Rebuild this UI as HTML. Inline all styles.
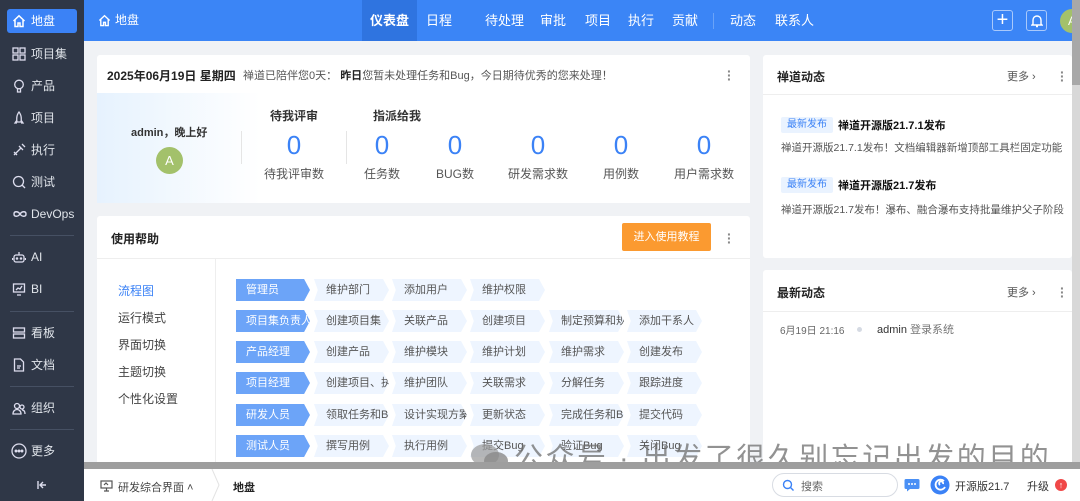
<!DOCTYPE html>
<html><head><meta charset="utf-8">
<style>
*{box-sizing:border-box;margin:0;padding:0}
body{width:1080px;height:501px;overflow:hidden;position:relative;background:#f0f2f5;font-family:"Liberation Sans","Noto Sans CJK SC",sans-serif;font-size:12px;color:#333}
.abs{position:absolute}
#side{left:0;top:0;width:84px;height:501px;background:#2f3747}
.si{position:absolute;left:7px;width:70px;height:24px;color:#e0e4ea;font-size:12px;line-height:24px;padding-left:24px}
.si svg{position:absolute;left:5px;top:5px}
.si.on{background:#3b82f6;border-radius:3px;color:#fff}
.sep{position:absolute;left:10px;width:64px;height:1px;background:#465063}
#top{left:84px;top:0;width:996px;height:41px;background:#3b85f6;color:#fff}
.nav{position:absolute;top:0;height:41px;line-height:41px;font-size:13px;color:#fff}
.card{position:absolute;background:#fff;border-radius:3px}
.chev{position:absolute;height:22px;line-height:22px;font-size:11px;color:#555;background:#eef5ff;padding-left:12px;clip-path:polygon(0 0,92% 0,100% 50%,92% 100%,0 100%,5% 50%);white-space:nowrap;overflow:hidden;width:75px}
.role{background:#6ca4f8;color:#fff;clip-path:polygon(0 0,92% 0,100% 50%,92% 100%,0 100%);padding-left:10px;width:74px}
.dots{position:absolute;color:#888;font-size:14px;font-weight:bold;line-height:4px;width:4px;text-align:center}
.num{position:absolute;color:#3b82f6;font-size:26px;text-align:center;width:80px}
.lbl{position:absolute;color:#555;font-size:12px;text-align:center;width:100px}
</style></head><body>
<div id="side" class="abs">
 <div class="si on" style="top:9px"><svg width="14" height="14" viewBox="0 0 14 14" fill="none" stroke="#fff" stroke-width="1.5"><path d="M1.5 7L7 1.8 12.5 7M3 5.8V12.5h3V9h2v3.5h3V5.8"/></svg>地盘</div>
 <div class="si" style="top:42px"><svg width="14" height="14" viewBox="0 0 14 14" fill="none" stroke="#dde" stroke-width="1.3"><rect x="1" y="1" width="5" height="5"/><rect x="8" y="1" width="5" height="5"/><rect x="1" y="8" width="5" height="5"/><rect x="8" y="8" width="5" height="5"/></svg>项目集</div>
 <div class="si" style="top:74px"><svg width="14" height="14" viewBox="0 0 14 14" fill="none" stroke="#dde" stroke-width="1.3"><circle cx="7" cy="5.5" r="4.3"/><path d="M5.5 10v3h3v-3"/></svg>产品</div>
 <div class="si" style="top:106px"><svg width="14" height="14" viewBox="0 0 14 14" fill="none" stroke="#dde" stroke-width="1.3"><path d="M7 1C4.5 4 4.5 8 5 11h4c.5-3 .5-7-2-10zM5 9L3 12h2M9 9l2 3H9"/></svg>项目</div>
 <div class="si" style="top:138px"><svg width="14" height="14" viewBox="0 0 14 14" fill="none" stroke="#dde" stroke-width="1.3"><path d="M2 12L9 5M7 3l4 4M10 1l3 3M2 9l3 3"/></svg>执行</div>
 <div class="si" style="top:170px"><svg width="14" height="14" viewBox="0 0 14 14" fill="none" stroke="#dde" stroke-width="1.3"><circle cx="6.5" cy="6.5" r="5"/><path d="M10 10l3 3"/></svg>测试</div>
 <div class="si" style="top:202px"><svg width="16" height="14" viewBox="0 0 16 14" fill="none" stroke="#dde" stroke-width="1.4"><path d="M8 7c-2-3-6-3-6 0s4 3 6 0 6-3 6 0-4 3-6 0z"/></svg>DevOps</div>
 <div class="sep" style="top:235px"></div>
 <div class="si" style="top:245px"><svg width="14" height="14" viewBox="0 0 14 14" fill="none" stroke="#dde" stroke-width="1.3"><rect x="2" y="5" width="10" height="7" rx="2"/><path d="M7 5V2M0.5 8v2M13.5 8v2"/><circle cx="5" cy="8.5" r=".6"/><circle cx="9" cy="8.5" r=".6"/></svg>AI</div>
 <div class="si" style="top:277px"><svg width="14" height="14" viewBox="0 0 14 14" fill="none" stroke="#dde" stroke-width="1.3"><rect x="1.5" y="2" width="11" height="8"/><path d="M4 8l2-2 2 1 2-3M5 13h4"/></svg>BI</div>
 <div class="sep" style="top:311px"></div>
 <div class="si" style="top:321px"><svg width="14" height="14" viewBox="0 0 14 14" fill="none" stroke="#dde" stroke-width="1.3"><rect x="1.5" y="2" width="11" height="4"/><rect x="1.5" y="8" width="11" height="4"/></svg>看板</div>
 <div class="si" style="top:353px"><svg width="14" height="14" viewBox="0 0 14 14" fill="none" stroke="#dde" stroke-width="1.3"><path d="M2.5 1h6l3 3v9h-9zM5 8h4M5 10h3"/></svg>文档</div>
 <div class="sep" style="top:386px"></div>
 <div class="si" style="top:396px"><svg width="14" height="14" viewBox="0 0 14 14" fill="none" stroke="#dde" stroke-width="1.3"><circle cx="5" cy="5" r="2.5"/><circle cx="10" cy="6" r="2"/><path d="M1 13c0-3 2-4.5 4-4.5s4 1.5 4 4.5zM10 9c2 0 3 1.5 3 4"/></svg>组织</div>
 <div class="sep" style="top:429px"></div>
 <div class="si" style="top:439px"><svg width="16" height="16" viewBox="0 0 16 16" fill="none" stroke="#dde" stroke-width="1.3" style="top:4px;left:4px"><circle cx="8" cy="8" r="7"/><circle cx="5" cy="8" r=".8" fill="#dde"/><circle cx="8" cy="8" r=".8" fill="#dde"/><circle cx="11" cy="8" r=".8" fill="#dde"/></svg>更多</div>
 <svg class="abs" style="left:36px;top:479px" width="12" height="12" viewBox="0 0 12 12" fill="none" stroke="#dde" stroke-width="1.4"><path d="M2 2v8M10 6H4M7 3L4 6l3 3"/></svg>
</div>
<div id="top" class="abs">
 <svg class="abs" style="left:14px;top:14px" width="13" height="13" viewBox="0 0 14 14" fill="none" stroke="#fff" stroke-width="1.5"><path d="M1.5 7L7 1.8 12.5 7M3 5.8V12.5h3V9h2v3.5h3V5.8"/></svg>
 <div class="nav" style="left:31px;font-size:12px">地盘</div>
 <div class="nav" style="left:278px;width:55px;background:#2f74e0;text-align:center;font-weight:bold">仪表盘</div>
 <div class="nav" style="left:342px">日程</div>
 <div class="nav" style="left:401px">待处理</div>
 <div class="nav" style="left:456px">审批</div>
 <div class="nav" style="left:501px">项目</div>
 <div class="nav" style="left:544px">执行</div>
 <div class="nav" style="left:588px">贡献</div>
 <div class="abs" style="left:629px;top:13px;width:1px;height:16px;background:#6aa3f8"></div>
 <div class="nav" style="left:646px">动态</div>
 <div class="nav" style="left:691px">联系人</div>
 <div class="abs" style="left:908px;top:10px;width:21px;height:21px;border:1px solid #a9c9fb;border-radius:3px;color:#fff;font-size:20px;line-height:18px;text-align:center">+</div>
 <div class="abs" style="left:942px;top:10px;width:21px;height:21px;border:1px solid #a9c9fb;border-radius:3px"><svg style="position:absolute;left:4px;top:3px" width="12" height="14" viewBox="0 0 12 14" fill="none" stroke="#fff" stroke-width="1.4"><path d="M2 10V6a4 4 0 018 0v4l1 1H1zM5 12.5h2"/></svg></div>
 <div class="abs" style="left:976px;top:9px;width:24px;height:24px;border-radius:50%;background:#a3c16b;color:#fff;line-height:24px;padding-left:8px">A</div>
</div>
<div class="abs" style="left:1072px;top:0;width:8px;height:462px;background:#d8d8d8"><div style="margin-top:0;height:85px;background:#a8a8a8"></div></div>

<!-- card1 -->
<div class="card" style="left:97px;top:55px;width:653px;height:148px">
 <div class="abs" style="left:10px;top:12px;font-weight:bold;font-size:12px;color:#222">2025年06月19日 星期四</div>
 <div class="abs" style="left:146px;top:12px;font-size:11px;color:#555">禅道已陪伴您0天： <b style="color:#222">昨日</b>您暂未处理任务和Bug，今日期待优秀的您来处理！</div>
 <div class="dots" style="left:630px;top:14px">·<br>·<br>·</div>
 <div class="abs" style="left:0;top:38px;width:653px;height:110px;background:linear-gradient(90deg,#e6f2fe 0%,#fff 25%)"></div>
 <div class="abs" style="left:34px;top:69px;font-weight:bold;font-size:11px;color:#333">admin，晚上好</div>
 <div class="abs" style="left:59px;top:92px;width:27px;height:27px;border-radius:50%;background:#a3c16b;color:#fff;text-align:center;line-height:27px;font-size:13px">A</div>
 <div class="abs" style="left:144px;top:76px;width:1px;height:33px;background:#e5e5e5"></div>
 <div class="abs" style="left:249px;top:76px;width:1px;height:33px;background:#e5e5e5"></div>
 <div class="abs" style="left:173px;top:52px;font-weight:bold;font-size:12px">待我评审</div>
 <div class="abs" style="left:276px;top:52px;font-weight:bold;font-size:12px">指派给我</div>
 <div class="num" style="left:157px;top:75px">0</div><div class="lbl" style="left:147px;top:110px">待我评审数</div>
 <div class="num" style="left:245px;top:75px">0</div><div class="lbl" style="left:235px;top:110px">任务数</div>
 <div class="num" style="left:318px;top:75px">0</div><div class="lbl" style="left:308px;top:110px">BUG数</div>
 <div class="num" style="left:401px;top:75px">0</div><div class="lbl" style="left:391px;top:110px">研发需求数</div>
 <div class="num" style="left:484px;top:75px">0</div><div class="lbl" style="left:474px;top:110px">用例数</div>
 <div class="num" style="left:567px;top:75px">0</div><div class="lbl" style="left:557px;top:110px">用户需求数</div>
</div>

<!-- card2 -->
<div class="card" style="left:97px;top:216px;width:653px;height:260px">
 <div class="abs" style="left:14px;top:14px;font-weight:bold;font-size:12px;color:#222">使用帮助</div>
 <div class="abs" style="left:525px;top:7px;width:89px;height:28px;background:#fb9a30;color:#fff;border-radius:2px;text-align:center;line-height:28px;font-size:11px">进入使用教程</div>
 <div class="dots" style="left:630px;top:16px">·<br>·<br>·</div>
 <div class="abs" style="left:0;top:42px;width:653px;height:1px;background:#eee"></div>
 <div class="abs" style="left:118px;top:43px;width:1px;height:220px;background:#eee"></div>
 <div class="abs" style="left:21px;top:62px;color:#3b82f6;font-size:12px;line-height:27px">流程图<br><span style="color:#444">运行模式<br>界面切换<br>主题切换<br>个性化设置</span></div>
</div>
<div class="abs" style="left:0;top:0">
 <div class="chev role" style="left:236px;top:279px">管理员</div>
 <div class="chev" style="left:314px;top:279px">维护部门</div><div class="chev" style="left:392px;top:279px">添加用户</div><div class="chev" style="left:470px;top:279px">维护权限</div>
 <div class="chev role" style="left:236px;top:310px">项目集负责人</div>
 <div class="chev" style="left:314px;top:310px">创建项目集</div><div class="chev" style="left:392px;top:310px">关联产品</div><div class="chev" style="left:470px;top:310px">创建项目</div><div class="chev" style="left:549px;top:310px">制定预算和规划</div><div class="chev" style="left:627px;top:310px">添加干系人</div>
 <div class="chev role" style="left:236px;top:341px">产品经理</div>
 <div class="chev" style="left:314px;top:341px">创建产品</div><div class="chev" style="left:392px;top:341px">维护模块</div><div class="chev" style="left:470px;top:341px">维护计划</div><div class="chev" style="left:549px;top:341px">维护需求</div><div class="chev" style="left:627px;top:341px">创建发布</div>
 <div class="chev role" style="left:236px;top:372px">项目经理</div>
 <div class="chev" style="left:314px;top:372px">创建项目、执行</div><div class="chev" style="left:392px;top:372px">维护团队</div><div class="chev" style="left:470px;top:372px">关联需求</div><div class="chev" style="left:549px;top:372px">分解任务</div><div class="chev" style="left:627px;top:372px">跟踪进度</div>
 <div class="chev role" style="left:236px;top:404px">研发人员</div>
 <div class="chev" style="left:314px;top:404px">领取任务和Bug</div><div class="chev" style="left:392px;top:404px">设计实现方案</div><div class="chev" style="left:470px;top:404px">更新状态</div><div class="chev" style="left:549px;top:404px">完成任务和Bug</div><div class="chev" style="left:627px;top:404px">提交代码</div>
 <div class="chev role" style="left:236px;top:435px">测试人员</div>
 <div class="chev" style="left:314px;top:435px">撰写用例</div><div class="chev" style="left:392px;top:435px">执行用例</div><div class="chev" style="left:470px;top:435px">提交Bug</div><div class="chev" style="left:549px;top:435px">验证Bug</div><div class="chev" style="left:627px;top:435px">关闭Bug</div>
</div>

<!-- right cards -->
<div class="card" style="left:763px;top:55px;width:309px;height:203px">
 <div class="abs" style="left:14px;top:13px;font-weight:bold;font-size:12px;color:#222">禅道动态</div>
 <div class="abs" style="left:244px;top:13px;font-size:11px;color:#555">更多 ›</div>
 <div class="dots" style="left:297px;top:15px">·<br>·<br>·</div>
 <div class="abs" style="left:0;top:39px;width:309px;height:1px;background:#eee"></div>
 <div class="abs" style="left:18px;top:62px;padding:0 6px;height:16px;line-height:16px;background:#eaf3ff;color:#3b82f6;font-size:10px;border-radius:2px">最新发布</div>
 <div class="abs" style="left:75px;top:62px;font-weight:bold;font-size:11px;color:#111">禅道开源版21.7.1发布</div>
 <div class="abs" style="left:18px;top:85px;font-size:10.5px;color:#555;white-space:nowrap;width:290px;overflow:hidden">禅道开源版21.7.1发布！文档编辑器新增顶部工具栏固定功能</div>
 <div class="abs" style="left:18px;top:122px;padding:0 6px;height:16px;line-height:16px;background:#eaf3ff;color:#3b82f6;font-size:10px;border-radius:2px">最新发布</div>
 <div class="abs" style="left:75px;top:122px;font-weight:bold;font-size:11px;color:#111">禅道开源版21.7发布</div>
 <div class="abs" style="left:18px;top:147px;font-size:10.5px;color:#555;white-space:nowrap;width:290px;overflow:hidden">禅道开源版21.7发布！瀑布、融合瀑布支持批量维护父子阶段</div>
</div>
<div class="card" style="left:763px;top:270px;width:309px;height:200px">
 <div class="abs" style="left:14px;top:14px;font-weight:bold;font-size:12px;color:#222">最新动态</div>
 <div class="abs" style="left:244px;top:14px;font-size:11px;color:#555">更多 ›</div>
 <div class="dots" style="left:297px;top:16px">·<br>·<br>·</div>
 <div class="abs" style="left:0;top:41px;width:309px;height:1px;background:#eee"></div>
 <div class="abs" style="left:17px;top:52px;font-size:10px;color:#666">6月19日 21:16</div>
 <div class="abs" style="left:94px;top:57px;width:5px;height:5px;border-radius:50%;background:#d5dae3"></div>
 <div class="abs" style="left:114px;top:51px;font-size:11px;color:#333">admin <span style="color:#777">登录系统</span></div>
</div>

<!-- watermark -->
<svg class="abs" style="left:470px;top:442px" width="40" height="30" viewBox="0 0 40 30"><ellipse cx="15" cy="13" rx="14" ry="11" fill="#9a9a9a" opacity=".7"/><ellipse cx="26" cy="19" rx="12" ry="9" fill="#8a8a8a" opacity=".8"/></svg>
<div class="abs" style="left:514px;top:435px;font-size:29px;color:rgba(110,110,110,.75);white-space:nowrap;letter-spacing:2.5px">公众号 · 出发了很久别忘记出发的目的</div>

<!-- bottom -->
<div class="abs" style="left:84px;top:462px;width:996px;height:7px;background:#9e9e9e"></div>
<div class="abs" style="left:84px;top:469px;width:996px;height:32px;background:#fff">
 <svg class="abs" style="left:16px;top:11px" width="13" height="12" viewBox="0 0 13 12" fill="none" stroke="#555" stroke-width="1.2"><rect x="1" y="1" width="11" height="7"/><path d="M4 11h5M6.5 8v3M4 5l2-2 2 2"/></svg>
 <div class="abs" style="left:34px;top:10px;font-size:11px;color:#444">研发综合界面 ˄</div>
 <svg class="abs" style="left:127px;top:0" width="10" height="32" viewBox="0 0 10 32" fill="none" stroke="#e3e3e3"><path d="M1 0l7 16-7 16"/></svg>
 <div class="abs" style="left:149px;top:10px;font-size:11px;font-weight:bold;color:#222">地盘</div>
 <div class="abs" style="left:688px;top:4px;width:126px;height:24px;border:1px solid #d8dce3;border-radius:12px"><svg style="position:absolute;left:9px;top:5px" width="13" height="13" viewBox="0 0 13 13" fill="none" stroke="#3b82f6" stroke-width="1.4"><circle cx="5.5" cy="5.5" r="4"/><path d="M8.5 8.5l3 3"/></svg><span style="position:absolute;left:28px;top:4px;font-size:11px;color:#666">搜索</span></div>
 <svg class="abs" style="left:820px;top:9px" width="16" height="14" viewBox="0 0 16 14"><path d="M2 1h12a1.5 1.5 0 011.5 1.5v7A1.5 1.5 0 0114 11H6l-3 2.5V11H2A1.5 1.5 0 01.5 9.5v-7A1.5 1.5 0 012 1z" fill="#4a90f5"/><circle cx="5" cy="6" r="1" fill="#fff"/><circle cx="8" cy="6" r="1" fill="#fff"/><circle cx="11" cy="6" r="1" fill="#fff"/></svg>
 <svg class="abs" style="left:846px;top:6px" width="20" height="20" viewBox="0 0 20 20"><circle cx="10" cy="10" r="9.5" fill="#3b82f6"/><path d="M14 6a5 5 0 10 1 6M10 10a2 2 0 113 -1" fill="none" stroke="#fff" stroke-width="1.8"/></svg>
 <div class="abs" style="left:871px;top:9px;font-size:11px;color:#333">开源版21.7</div>
 <div class="abs" style="left:943px;top:9px;font-size:11px;color:#333">升级</div>
 <div class="abs" style="left:971px;top:10px;width:12px;height:12px;border-radius:50%;background:#f04848;color:#fff;font-size:9px;line-height:12px;text-align:center;font-weight:bold">↑</div>
</div>
</body></html>
